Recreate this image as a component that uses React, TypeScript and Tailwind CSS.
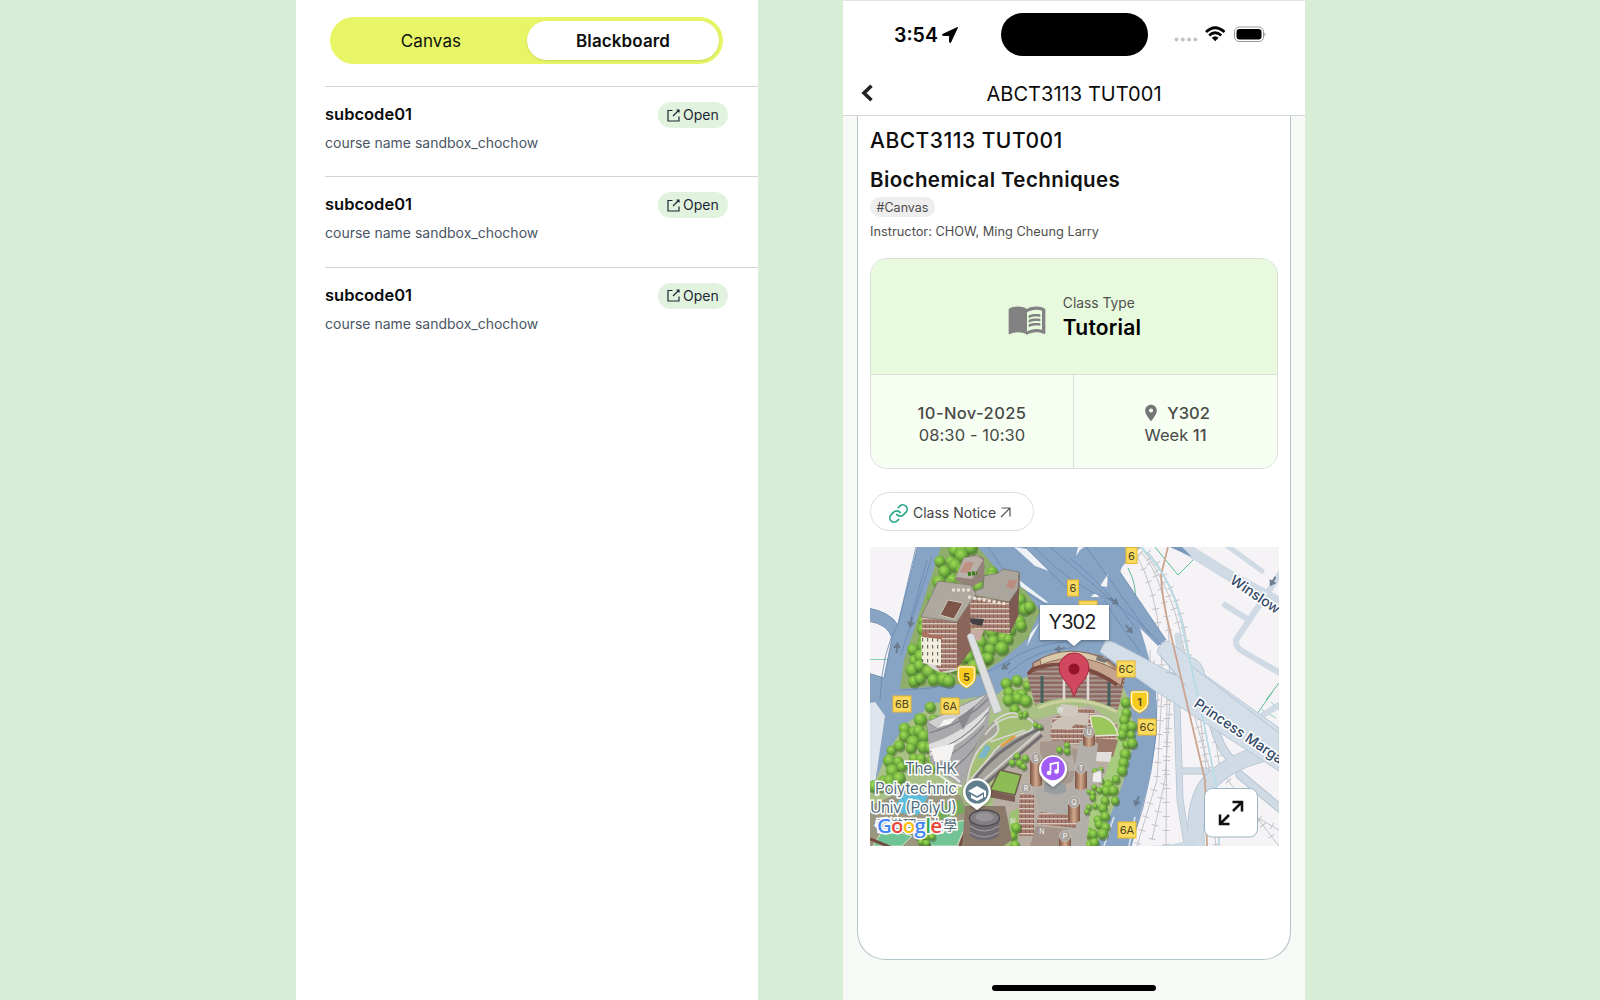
import React from 'react';
import { MdMenuBook, MdPlace } from 'react-icons/md';

interface Course {
  code: string;
  name: string;
}

const courses: Course[] = [
  { code: 'subcode01', name: 'course name sandbox_chochow' },
  { code: 'subcode01', name: 'course name sandbox_chochow' },
  { code: 'subcode01', name: 'course name sandbox_chochow' },
];

type Point = [number, number];

const inside = (x: number, y: number, poly: Point[]) => {
  let hit = false;
  for (let i = 0, j = poly.length - 1; i < poly.length; j = i++) {
    const [xi, yi] = poly[i];
    const [xj, yj] = poly[j];
    if (yi > y !== yj > y && x < ((xj - xi) * (y - yi)) / (yj - yi) + xi) hit = !hit;
  }
  return hit;
};

// Fills a polygon with slightly shuffled tree crowns
const Trees: React.FC<{ area: Point[]; step?: number; size?: number }> = ({ area, step = 10, size = 6.2 }) => {
  const trees: { x: number; y: number; r: number }[] = [];
  let seed = 7;
  const rand = () => {
    seed = (seed * 16807) % 2147483647;
    return seed / 2147483647;
  };
  for (let y = 545; y < 850; y += step) {
    for (let x = 868; x < 1160; x += step) {
      const px = x + rand() * step * 0.7;
      const py = y + rand() * step * 0.7;
      const r = size * (0.8 + rand() * 0.3);
      if (inside(px, py, area)) trees.push({ x: px, y: py, r });
    }
  }
  return (
    <g>
      {trees.map((t, i) => (
        <g key={i}>
          <circle cx={t.x + 1} cy={t.y + 2} r={t.r} fill="#3d5a22" opacity="0.45" />
          <circle cx={t.x} cy={t.y} r={t.r} fill="url(#crown)" />
        </g>
      ))}
    </g>
  );
};

const Rail: React.FC<{ d: string }> = ({ d }) => (
  <g fill="none" stroke="#c3c5ca">
    <path d={d} strokeWidth="1" />
    <path d={d} strokeWidth="7" strokeDasharray="1 13" />
  </g>
);

const RouteBadge: React.FC<{ x: number; y: number; label: string }> = ({ x, y, label }) => {
  const w = label.length > 1 ? 18 : 11;
  return (
    <g>
      <rect x={x - w / 2} y={y - 8} width={w} height={16} fill="#fbdb5d" stroke="#e5b52c" />
      <text x={x} y={y + 4} fontSize="11" textAnchor="middle" fill="#4a4328" className="font-[Inter]">
        {label}
      </text>
    </g>
  );
};

const Shield: React.FC<{ x: number; y: number; label: string }> = ({ x, y, label }) => (
  <g>
    <path
      d={`M${x - 6} ${y - 10}h12q2 0 2 2v8q0 6 -8 10q-8 -4 -8 -10v-8q0 -2 2 -2z`}
      fill="#f6cb1d"
      stroke="#d9ac16"
      strokeWidth="3"
    />
    <path
      d={`M${x - 6} ${y - 10}h12q2 0 2 2v8q0 6 -8 10q-8 -4 -8 -10v-8q0 -2 2 -2z`}
      fill="#f6cb1d"
      stroke="#fff6d0"
      strokeWidth="1.500"
    />
    <text x={x} y={y + 4} fontSize="11" fontWeight="600" textAnchor="middle" fill="#4a4328" className="font-[Inter]">
      {label}
    </text>
  </g>
);

const Letter: React.FC<{ x: number; y: number; label: string }> = ({ x, y, label }) => (
  <g>
    <circle cx={x} cy={y} r="5.500" fill="#aaa49f" stroke="#c3beb9" />
    <text x={x} y={y + 2.5} fontSize="7" textAnchor="middle" fill="#fff" className="font-[Inter]">
      {label}
    </text>
  </g>
);

const TowerShaft: React.FC<{ x: number; y: number; h: number }> = ({ x, y, h }) => (
  <path d={`M${x - 6} ${y}v${h}q6 4 12 0v${-h}z`} fill="url(#shaft)" />
);

const northTrees: Point[] = [
  [942, 549], [972, 547], [992, 568], [1022, 590], [1036, 612], [1026, 634], [1000, 656], [966, 682], [905, 687], [904, 664], [920, 620],
];
const westTrees: Point[] = [
  [926, 702], [944, 712], [934, 735], [934, 765], [925, 775], [905, 770], [896, 790], [872, 790], [890, 752], [904, 728],
];
const bridgeTrees: Point[] = [
  [1000, 686], [1027, 674], [1033, 704], [1018, 714], [1000, 708],
];
const eastTrees: Point[] = [
  [1118, 690], [1129, 694], [1134, 735], [1124, 780], [1102, 846], [1082, 846], [1100, 800], [1114, 770], [1120, 735],
];

const CampusMap: React.FC = () => (
  <svg className="block h-[299px] w-full" viewBox="870 547 409 299" preserveAspectRatio="none">
    <defs>
      <radialGradient id="crown" cx="42%" cy="35%" r="65%">
        <stop offset="0" stopColor="#a5dc58" />
        <stop offset="0.5" stopColor="#79b843" />
        <stop offset="1" stopColor="#4c822e" />
      </radialGradient>
      <linearGradient id="shaft">
        <stop offset="0" stopColor="#7b5242" />
        <stop offset="0.5" stopColor="#d5aa8d" />
        <stop offset="1" stopColor="#7c5443" />
      </linearGradient>
      <pattern id="brick" width="4" height="5" patternUnits="userSpaceOnUse">
        <rect width="4" height="5" fill="#a67c6e" />
        <rect y="3" width="4" height="1.300" fill="#d9cac0" />
        <rect x="1" width="1" height="3" fill="#8a6156" />
      </pattern>
      <pattern id="floors" width="40" height="4.500" patternUnits="userSpaceOnUse">
        <rect width="40" height="4.500" fill="#8e685e" />
        <rect width="40" height="2" fill="#a79a94" />
      </pattern>
      <pattern id="white-tower" width="5" height="7" patternUnits="userSpaceOnUse">
        <rect width="5" height="7" fill="#f2efdf" />
        <rect x="2" y="1" width="1.200" height="3.500" fill="#6b6a64" />
      </pattern>
      <filter id="drop" x="-20%" y="-20%" width="140%" height="150%">
        <feDropShadow dx="0" dy="1" stdDeviation="1.500" floodOpacity="0.4" />
      </filter>
    </defs>

    <rect x="870" y="547" width="409" height="299" fill="#f5f3f5" />

    {/* railway yard */}
    <Rail d="M1137 556Q1156 590 1160 640T1162 690L1157 780L1137 846" />
    <Rail d="M1141 552Q1166 580 1169 640L1170 700L1165 780L1152 840" />
    <Rail d="M1148 552Q1180 590 1188 650L1190 665" />
    <Rail d="M1141 547Q1174 590 1184 650L1192 668" />
    <Rail d="M1167 690L1166 846" />
    <Rail d="M1199 705L1205 760L1216 846" />
    <Rail d="M1190 700L1207 760L1226 820" />
    <Rail d="M1210 700L1220 770L1279 846" />
    <Rail d="M1235 805L1279 830" />
    <path d="M1135 700L1160 700M1150 650L1151 690M1154 660L1158 700" stroke="#c1c4ca" />
    <path d="M1155 547L1178 575L1194 559M1128 568Q1137 585 1135 600M1266 700L1279 683M1257 714L1273 691" stroke="#5cb99a" fill="none" />
    <path d="M1271 702L1279 710M1262 710L1276 718" stroke="#8fd0ba" fill="none" />

    {/* blue roads */}
    <path d="M870 547H1140L1124 562L1120 572L1166 640L1158 646L1140 628Q1152 665 1156 690L1157 730Q1152 780 1131 846H870Z" fill="#87a4c4" />
    <path d="M868 545H918L898 625Q890 612 868 608Z" fill="#f5f3f5" stroke="#6f91b5" />
    <path d="M868 621Q888 624 892 638L884 678L868 673Z" fill="#f5f3f5" stroke="#6f91b5" />
    <path d="M870 659.500H887" stroke="#8acbb5" />
    <path d="M870 703L875 702L885 716L874 790L870 800Z" fill="#dfe5ec" />
    <path d="M1014 547L1035 566L1049 571L1027 549Z" fill="#eef1f5" />
    <path d="M1019 580L1049 603L1044 602L1021 587Z" fill="#eef1f5" />
    <path d="M1030 634L1040 622L1027 646Z" fill="#eef1f5" />
    <path d="M1108 574L1100 586L1107 587Z" fill="#f5f3f5" />
    <path d="M1091 597Q1096 590 1099 597Z" fill="#f5f3f5" />
    <path d="M1076 556L1080 550L1084 547H1078Z" fill="#eef1f5" />
    <path d="M1121 547H1139L1121 568L1118 580L1108 560Z" fill="#87a4c4" />
    <g fill="none" stroke="#6688b0" strokeWidth="0.8">
      <path d="M916 547L898 624Q882 650 880 700M932 556L901 655M927 560L909 625" />
      <path d="M988 547Q1014 590 1050 607M1025 547L1070 591" />
      <path d="M1034 547Q1070 585 1110 600Q1138 618 1162 646M1050 547L1118 606M1086 547L1150 635" />
      <path d="M1070 558Q1110 590 1137 630M1104 600L1117 620L1140 652" />
      <path d="M1120 572L1166 640" />
      <path d="M1003 665Q1035 640 1080 642M1008 673Q1040 646 1072 648M900 690Q960 690 1010 660" />
      <path d="M1157 700Q1158 770 1131 846" />
    </g>
    <path d="M1114 817L1104 846M1135 817L1129 846" stroke="#dbe5ee" strokeWidth="1.600" />

    {/* pale roads */}
    <g fill="none" stroke="#b5c3d1" strokeLinejoin="round" strokeLinecap="round">
      <path d="M1177 705L1180 800L1188 850" strokeWidth="7" />
      <path d="M1181 771H1206" strokeWidth="7" />
      <path d="M1207 690Q1213 740 1229 757" strokeWidth="9" />
      <path d="M1240 775L1282 810" strokeWidth="9" />
      <path d="M1285 750Q1235 755 1208 784Q1192 806 1197 850" strokeWidth="17" />
    </g>
    <g fill="none" stroke="#cfdae5" strokeLinejoin="round" strokeLinecap="round">
      <path d="M1177 705L1180 800L1188 850" strokeWidth="5.500" />
      <path d="M1181 771H1206" strokeWidth="5.500" />
      <path d="M1207 690Q1213 740 1229 757" strokeWidth="7" />
      <path d="M1240 775L1282 810" strokeWidth="7" />
      <path d="M1285 750Q1235 755 1208 784Q1192 806 1197 850" strokeWidth="15.500" />
      <path d="M1178 636L1182 665" strokeWidth="7" />
      <path d="M1180 545L1232 577L1290 608" strokeWidth="11" />
      <path d="M1222 542L1262 571" strokeWidth="5" />
      <path d="M1282 571L1236 640Q1235 647 1242 651L1285 676" strokeWidth="6" />
      <path d="M1225 605L1249 620" strokeWidth="6" />
      <path d="M1279 705L1252 722" strokeWidth="6" />
    </g>
    <path d="M1170 547H1182L1192 557Z" fill="#7896b9" />
    <path
      d="M1100 652L1106 640L1115 643L1176 675L1157 652Q1160 642 1168 641L1190 657Q1202 660 1205 675L1279 728V771L1190 713L1154 690Z"
      fill="#d4dee8"
      stroke="#b8c8d6"
    />
    <path d="M1160 655L1186 686M1176 675L1166 672M1190 665L1279 733" stroke="#b2c2d1" fill="none" />
    <path d="M1150 846Q1190 844 1190 836L1197 846Z" fill="#ccd8e3" />
    <path d="M1168 547L1161 575Q1162 600 1170 631L1205 780L1207 846" stroke="#cba48f" strokeWidth="1.800" fill="none" />
    <path d="M1141 547Q1176 580 1185 640L1202 714L1219 800V846" stroke="#b8dce6" strokeWidth="1.800" fill="none" />

    {/* north block */}
    <path d="M941 547H978L1000 573L1025 590L1040 611L1028 638L1002 660L965 684L900 689L904 660Z" fill="#8fae6c" />
    <Trees area={northTrees} />
    <path d="M925 662Q940 680 962 668L955 655Z" fill="#d7d4cf" />
    <path d="M955 580L963 558L976 555L984 558V580L970 588Z" fill="#93817a" />
    <path d="M956 577L964 558L977 556L983 560L972 579Z" fill="#b8b0a8" />
    <path d="M965 562L974 562L969 573L960 572Z" fill="#bd9183" />
    <path d="M968 574L977 573" stroke="#3c7b1c" strokeWidth="4" strokeDasharray="3 1" />
    <path d="M1008 602L1020 572L1018 616L1010 634Z" fill="#7d5b52" />
    <path d="M968 595L1009 602L1010 634L970 628Z" fill="url(#brick)" />
    <path d="M968 618L984 619L982 626L972 624Z" fill="#444044" />
    <path d="M966 628L984 630L980 641L972 640Z" fill="#c9aaa2" />
    <path d="M967 594L983 588L984 576L998 573L1003 569L1019 572L1018 589L1009 602Z" fill="#aaa59d" stroke="#7d746e" strokeWidth="0.800" />
    <path d="M1009 580L1017 580L1014 589L1006 587Z" fill="#b98d7d" />
    <path d="M952 588L968 590V600L948 596Z" fill="#a38778" />
    <path d="M956 620L970 596L971 650L957 669Z" fill="#8a655a" />
    <path d="M922 617L957 621V669L940 672L922 645Z" fill="url(#brick)" />
    <path d="M938 581L971 585L976 594L957 622L921 617Z" fill="#aea99f" stroke="#827970" strokeWidth="0.800" />
    <path d="M948 600L963 603L954 619L940 615Z" fill="#7e5647" stroke="#d0cabf" />
    <path d="M952 590H972M968 597L1006 604" stroke="#e7e1d8" strokeWidth="3" strokeDasharray="3 2" />
    <path d="M921 637L941 639V666L922 663Z" fill="url(#white-tower)" />
    <path d="M922 633L930 636L942 638" stroke="#aa715f" strokeWidth="3" fill="none" />

    {/* main campus */}
    <path
      d="M935 703L998 694L1010 682L1030 676L1120 680L1129 700L1135 735Q1125 790 1096 846H870V792L890 748L906 724Z"
      fill="#a9c184"
    />
    <path d="M985 846L995 790L1010 750L1035 720L1090 705L1115 725L1108 770L1080 846Z" fill="#b8aea3" />
    <Trees area={westTrees} step={10} size={6} />
    <Trees area={bridgeTrees} step={9} size={5.500} />
    <path d="M1117 695Q1138 740 1096 846H1074L1105 775L1119 730Z" fill="#a8cb7e" />
    <Trees area={eastTrees} step={9} size={5} />

    {/* low roofs and courts bottom left */}
    <path d="M870 806L905 790L960 795L985 846H870Z" fill="#9a967f" />
    <path d="M892 812L903 793L928 796L918 815Z" fill="#5dbddb" />
    <path d="M884 828L912 836L902 846H873Z" fill="#6fc495" stroke="#d9e2c5" />
    <path d="M935 824L968 820L957 846H925Z" fill="#72c496" stroke="#e1e3cf" />
    <path d="M931 808L960 800L966 812L940 820Z" fill="#74aa59" />
    <path d="M870 839L900 851M916 828L930 846M960 846L973 812" stroke="#754b42" strokeWidth="3" />
    <Trees
      area={[[915, 822], [930, 818], [934, 846], [912, 846]]}
      step={7}
      size={4}
    />

    {/* sweeping tower */}
    <path d="M927 722L988 693L991 706L988 728L962 786L948 778L930 762Z" fill="#a9a8ab" />
    <path d="M927 722L988 693Q970 714 938 729Z" fill="#d0d0d1" stroke="#8a888c" strokeWidth="0.800" />
    <path d="M929 744Q960 735 990 706L984 721Q960 748 930 756Z" fill="#dededf" />
    <path d="M929 733Q964 724 989 698M930 752Q965 742 988 712M934 764Q968 746 984 726M945 775Q970 757 978 742" fill="none" stroke="#807e84" strokeWidth="1.200" />
    <path d="M931 749L955 743L950 760L934 761Z" fill="#f4f3f1" />
    <path d="M944 720L956 718L950 724L939 727Z" fill="#f7f6f4" />
    <path d="M958 718L975 706L963 730Z" fill="#8a888d" />
    <path d="M960 782Q952 774 936 768M962 786L952 784L938 774" stroke="#f0efec" strokeWidth="2" fill="none" />

    {/* winding garden deck */}
    <path d="M964 788Q970 742 993 722L1020 712L1045 726L1005 765L976 792Z" fill="#a3a399" />
    <path d="M967 784Q972 748 992 738Q1003 730 995 721Q1010 708 1022 716Q1040 722 1030 731Q1000 740 990 757Z" fill="#a3c075" stroke="#d6d5cd" strokeWidth="2" />
    <path d="M978 758L986 744L991 748L985 758Z" fill="#7cb7c9" />
    <path d="M968 788Q987 760 1012 744T1044 729M975 793L1042 735" stroke="#716d71" strokeWidth="3" fill="none" />
    <path d="M972 790L1040 731M985 735Q1000 714 1022 717M990 742L1025 730" stroke="#d7d5d1" strokeWidth="1.800" fill="none" />
    <path d="M1001 746L1015 736" stroke="#e89e3f" strokeWidth="2.500" />
    <Trees area={[[1017, 711], [1028, 711], [1028, 717], [1017, 717]]} step={5} size={2.5} />
    <Trees area={[[1030, 722], [1042, 722], [1042, 729], [1030, 729]]} step={5} size={2.5} />
    <Trees area={[[1015, 754], [1030, 752], [1024, 768], [1010, 766]]} step={7} size={3.5} />

    {/* central buildings */}
    <path d="M1000 770L1021 775L1015 795L990 790Z" fill="#8dbb56" stroke="#6d5d4a" strokeWidth="1.500" />
    <path d="M990 790L1015 796V802L988 797Z" fill="#7b5f54" />
    <path d="M1050 735L1053 718L1070 713L1074 707L1094 710L1096 716L1117 724L1116 742L1090 747L1052 741Z" fill="url(#brick)" />
    <path d="M1052 723L1068 712L1089 713L1088 726L1075 724L1070 730L1052 728Z" fill="#cdc3b9" />
    <path d="M1090 716Q1113 713 1118 735L1094 736Z" fill="#9bc75b" stroke="#e9e4da" strokeWidth="1.500" />
    <path d="M1058 708L1062 704L1078 706L1078 716L1060 716Z" fill="#d0c9bf" />
    <path d="M1096 738L1118 740L1113 757L1093 754Z" fill="#9b7868" />
    <path d="M1095 752L1112 752L1110 762L1094 761Z" fill="#e2dfdc" />
    <path d="M1040 742L1062 740L1070 748L1095 752L1090 775L1066 784L1040 775Z" fill="#a8978d" />
    <path d="M1056 748L1070 744L1076 770L1058 774Z" fill="#b5ada5" />
    <path d="M1079 742Q1089 734 1098 744L1086 846H1062Z" fill="#b3afab" />
    <path d="M1035 788L1078 790L1080 815L1040 812Z" fill="#b0aca8" />
    <path d="M1040 812L1078 816L1076 828L1036 824Z" fill="url(#brick)" />
    <path d="M1020 789L1034 793V836H1018Z" fill="url(#brick)" />
    <path d="M1018 792L1028 784L1038 787L1034 795Z" fill="#b6b1ac" />
    <path d="M1036 826L1068 829L1063 846H1030Z" fill="#a39388" />
    <path d="M1010 812L1019 808L1018 846H1005Z" fill="#9ec073" />
    <TowerShaft x={1089} y={733} h={12} />
    <TowerShaft x={1081} y={771} h={17} />
    <TowerShaft x={1036} y={760} h={25} />
    <TowerShaft x={1074} y={804} h={17} />
    <TowerShaft x={1065} y={837} h={12} />
    <Letter x={1089} y={732} label="U" />
    <Letter x={1081} y={768} label="T" />
    <Letter x={1036} y={758} label="S" />
    <Letter x={1026} y={788} label="R" />
    <Letter x={1074} y={802} label="Q" />
    <Letter x={1065} y={836} label="P" />
    <g fontSize="7" fill="#eee" textAnchor="middle" className="font-[Inter]">
      <text x="1013" y="824">N</text>
      <text x="1042" y="834">N</text>
      <text x="1060" y="713">W</text>
      <text x="984.500" y="813">M</text>
    </g>
    <Trees area={[[1091, 763], [1106, 765], [1097, 812], [1086, 812]]} step={7} size={2.8} />
    <Trees area={[[1055, 745], [1068, 745], [1068, 755], [1055, 755]]} step={7} size={3.5} />
    <Trees area={[[1010, 822], [1020, 822], [1018, 846], [1006, 846]]} step={8} size={5} />
    <path d="M1093 773L1101 770L1102 783L1092 782Z" fill="#f0eeec" stroke="#b7b3b0" />
    <path d="M1044 784Q1053 778 1066 785V792Q1054 797 1044 791Z" fill="#989da0" />

    {/* round tower */}
    <path d="M965 806L1005 806L1012 840L998 850H962Z" fill="#8b7a69" />
    <path d="M970 818V836Q984 845 999 836V818Z" fill="#6f6a70" />
    <ellipse cx="984.500" cy="818" rx="15" ry="8" fill="#817d81" stroke="#504d54" strokeWidth="1.500" />
    <ellipse cx="984.500" cy="817" rx="9" ry="4.500" fill="#979498" />
    <path d="M970 826Q984 836 999 826M970 832Q984 842 999 832" stroke="#a8a3a8" fill="none" />

    {/* crescent building */}
    <path d="M1027 675Q1035 657 1048 657L1053 653Q1090 648 1108 659L1124 673L1125 680L1118 710Q1076 689 1035 705Z" fill="url(#floors)" />
    <path d="M1033 663Q1066 643 1109 661L1124 674L1121 686Q1076 652 1033 672Z" fill="#c5a58d" stroke="#794e43" />
    <path d="M1040 659Q1069 644 1103 658L1116 670Q1078 649 1041 665Z" fill="#d9c9ab" stroke="#8d6b58" />
    <path d="M1028 674L1033 669Q1072 655 1117 685" stroke="#7c4b42" strokeWidth="3.500" fill="none" />
    <path d="M1042 676V703M1109 682V706" stroke="#45605f" strokeWidth="3" />
    <path d="M1064 672V700M1088 672V700" stroke="#e1dcda" strokeWidth="2.500" />
    <path d="M1097 656L1107 660L1105 663L1096 660Z" fill="#77787c" />
    <path d="M1038 708Q1076 691 1117 712" stroke="#cbd2a0" strokeWidth="3" fill="none" />

    {/* footbridge */}
    <path d="M967 636Q970 631 974 635L1002 711L994 714Z" fill="#dcdedf" stroke="#aaa9a8" strokeWidth="0.700" />

    {/* direction arrows on the roads */}
    {[
      [911, 622, 100], [897, 648, -85], [1006, 666, 140], [1060, 649, 170], [1114, 601, 35], [1129, 629, 50], [1137, 801, 110], [1273, 581, 120],
    ].map(([x, y, angle], i) => (
      <path key={i} d="M-5 -1H0V-4L6 0L0 4V1H-5Z" fill="#6c7c90" transform={`translate(${x} ${y}) rotate(${angle})`} />
    ))}

    <RouteBadge x={1131.5} y={555.5} label="6" />
    <RouteBadge x={1073} y={588} label="6" />
    <rect x="1079" y="601" width="18" height="12" fill="#fbdb5d" stroke="#e5b52c" />
    <RouteBadge x={1126} y={669} label="6C" />
    <RouteBadge x={1147} y={727} label="6C" />
    <RouteBadge x={1127} y={830} label="6A" />
    <RouteBadge x={902} y={704} label="6B" />
    <RouteBadge x={950} y={706} label="6A" />
    <Shield x={966.5} y={677} label="5" />
    <Shield x={1139.5} y={702} label="1" />

    <g fill="#33496a" stroke="#fff" strokeWidth="3" paintOrder="stroke" fontSize="14" fontWeight="500" className="font-[Inter]">
      <text transform="translate(1229 582.500) rotate(34)">Winslow</text>
      <text transform="translate(1193 706) rotate(34)">Princess Marga</text>
    </g>
    <g
      fill="#546c7a"
      stroke="#fff"
      strokeWidth="3"
      paintOrder="stroke"
      fontSize="15.500"
      textAnchor="end"
      className="font-[Inter,'Noto_Sans_CJK_TC',sans-serif]"
    >
      <text x="957" y="774" textLength="52">The HK</text>
      <text x="957" y="793.500" textLength="82">Polytechnic</text>
      <text x="957" y="813" textLength="87">Univ (PolyU)</text>
      <text x="957" y="830" fontSize="13.500">香港理工大學</text>
    </g>

    <text x="877" y="833" fontSize="20.500" fontWeight="600" textLength="65" stroke="#fff" strokeWidth="3" paintOrder="stroke" className="font-['Open_Sans']">
      <tspan fill="#4285f4">G</tspan>
      <tspan fill="#ea4335">o</tspan>
      <tspan fill="#fbbc05">o</tspan>
      <tspan fill="#4285f4">g</tspan>
      <tspan fill="#34a853">l</tspan>
      <tspan fill="#ea4335">e</tspan>
    </text>

    {/* place markers */}
    <g filter="url(#drop)">
      <path d="M977 810L968 803A14 14 0 1 1 986 803Z" fill="#fff" />
      <circle cx="977" cy="792" r="11.500" fill="#607d8b" />
      <path d="M977 786L968 791L977 796L984 792V797H986V791ZM971 794.500V798L977 801L983 798V794.500L977 798Z" fill="#fff" />
    </g>
    <g filter="url(#drop)">
      <path d="M1053 787L1044 780A14 14 0 1 1 1062 780Z" fill="#fff" />
      <circle cx="1053" cy="768.500" r="11.800" fill="#a15cf5" />
      <path d="M1050.500 773V764L1058 762.500V771.500" stroke="#fff" strokeWidth="1.800" fill="none" />
      <circle cx="1049" cy="773" r="2.300" fill="#fff" />
      <circle cx="1056.500" cy="771.500" r="2.300" fill="#fff" />
    </g>
    <path
      d="M1074 697Q1072 688 1065 681Q1059 674 1059 668A15 15 0 0 1 1089 668Q1089 674 1083 681Q1076 688 1074 697Z"
      fill="#d0475e"
      stroke="#a62b42"
    />
    <circle cx="1074" cy="669" r="5.500" fill="#951428" />

    <g filter="url(#drop)">
      <path d="M1040 605H1109V640H1081L1074 646L1067 640H1040Z" fill="#fff" />
    </g>
    <text x="1072.500" y="629" fontSize="20" textLength="48" textAnchor="middle" fill="#1c1c1e" className="font-[Inter]">
      Y302
    </text>

    {/* expand button */}
    <rect x="1204.500" y="788.500" width="53" height="48.500" rx="8" fill="#fff" stroke="#9db5c1" />
    <g fill="none" stroke="#111" strokeWidth="2.500">
      <path d="M1232.500 802H1242V811.500M1242 802L1233 811" />
      <path d="M1220 814.500V824H1229.500M1220 824L1229 815" />
    </g>
  </svg>
);

const CourseList: React.FC = () => (
  <section className="h-full w-[462px] bg-white">
    <div className="ml-[34px] mt-[17px] flex h-[47px] w-[393px] rounded-full bg-[#e7f566] p-1 text-[17px] text-[#0d0f0c]">
      <button className="flex-1 pt-[3px] pl-px tracking-[0.1px]">Canvas</button>
      <button className="flex-1 rounded-full bg-white pt-[3px] font-semibold tracking-[0.1px] shadow-sm">Blackboard</button>
    </div>
    <ul className="ml-[29px] mt-[22px]">
      {courses.map((course, index) => (
        <li key={index} className="flex h-[90.3px] items-start justify-between border-t border-[#d0d5dc] pr-[30px] pt-[15px]">
          <div className="-mt-px">
            <h3 className="text-[16.5px] leading-[26px] font-semibold text-[#0b0c0e]">{course.code}</h3>
            <p className="mt-1 text-[14px] leading-6 text-[#4a5563]">{course.name}</p>
          </div>
          <button className="flex h-[26px] w-[70px] items-center gap-[3px] rounded-full bg-[#e1f2df] pb-px pl-[9px] text-[14px] text-[#1d2733]">
            <svg viewBox="0 0 13 13" className="mt-px h-[13px] w-[13px]" fill="none" stroke="currentColor" strokeWidth="1.200">
              <path d="M5.500 1.500H1V12H12V7.500M6 7L12 1M9.500 1H12V3.500" />
            </svg>
            Open
          </button>
        </li>
      ))}
    </ul>
  </section>
);

const StatusBar: React.FC = () => (
  <div className="flex h-[69px] items-start border-t border-[#e5e5e5]">
    <div className="ml-[51px] mt-[19px] flex w-[107px] items-center gap-[4px]">
      <span className="text-[19.5px] leading-[30px] font-semibold text-black">3:54</span>
      <svg viewBox="0 0 16 16" className="h-4 w-4">
        <path d="M15.500 0.500L0.500 7.500Q0 8.200 1 8.400H7.600V15Q7.900 16 8.600 15.300Z" fill="#000" stroke="#000" strokeLinejoin="round" />
      </svg>
    </div>
    <div className="mt-3 h-[43px] w-[147px] rounded-full bg-black" />
    <svg viewBox="0 0 92 18" className="ml-[26px] mt-[24px] h-[18px] w-[92px]">
      <g fill="#c4c4c4">
        <circle cx="2.500" cy="14.500" r="2" />
        <circle cx="8.800" cy="14.500" r="2" />
        <circle cx="15.100" cy="14.500" r="2" />
        <circle cx="21.400" cy="14.500" r="2" />
      </g>
      <g fill="none" stroke="#000" strokeWidth="2.700">
        <path d="M32 7Q41 -1.500 50.500 7" />
        <path d="M35.200 10.500Q41 5 47.300 10.500" />
      </g>
      <path d="M37.800 12.800Q41.200 9.800 44.700 12.800L41.200 16.300Z" fill="#000" />
      <rect x="60.500" y="2" width="29" height="14.500" rx="4.500" fill="none" stroke="#9a9a9a" />
      <rect x="62.500" y="4" width="25" height="10.500" rx="3" fill="#000" />
      <path d="M90.500 7.500Q92.500 9.500 90.500 11.500Z" fill="#888" />
    </svg>
  </div>
);

const ClassDetail: React.FC = () => (
  <section className="flex h-full w-[462px] flex-col bg-[#f7f9f6]">
    <header className="h-[116px] shrink-0 border-b border-[#d5d8da] bg-white">
      <StatusBar />
      <div className="flex h-[46px] items-center pt-[2px]">
        <svg viewBox="0 0 12 18" className="ml-[18px] h-[18px] w-3" fill="none" stroke="#222" strokeWidth="3.600">
          <path d="M10.500 1.800L3 9L10.500 16.200" />
        </svg>
        <h1 className="flex-1 pt-px pr-[30px] text-center text-[20px] tracking-[0.05px] text-[#0c0c0c]">ABCT3113 TUT001</h1>
      </div>
    </header>
    <main className="mx-[14px] h-[844px] shrink-0 rounded-b-[28px] border border-t-0 border-[#b4c3ca] bg-white px-3">
      <h2 className="pt-[9px] text-[21px] leading-8 font-medium tracking-[0.5px] text-[#0c0c0c]">ABCT3113 TUT001</h2>
      <h2 className="mt-[7px] text-[20.5px] leading-8 font-semibold tracking-[0.4px] text-[#111]">Biochemical Techniques</h2>
      <span className="mt-px flex h-5 w-[65px] items-center justify-center rounded-full bg-[#eeeeee] pt-[2px] text-[12.5px] text-[#4b4b4b]">
        #Canvas
      </span>
      <p className="mt-[5px] text-[12.8px] leading-5 text-[#4e4e4e]">Instructor: CHOW, Ming Cheung Larry</p>

      <div className="mt-4 h-[211px] overflow-hidden rounded-[17px] border border-[#dadedb]">
        <div className="flex h-[116px] items-center justify-center gap-[16px] border-b border-[#dadedb] bg-[#e8fade] pt-[2px]">
          <MdMenuBook className="mt-[2px] h-10 w-10 text-[#828282]" />
          <div>
            <div className="text-[13.8px] leading-5 text-[#505050]">Class Type</div>
            <div className="text-[21px] leading-[30px] font-semibold tracking-[0.2px] text-black">Tutorial</div>
          </div>
        </div>
        <div className="grid h-[93px] grid-cols-2 bg-[#f7fef2] text-center text-[16.5px] leading-[22px] text-[#484a48]">
          <div className="border-r border-[#dadedb] pt-[27px]">
            <div className="font-medium tracking-[0.4px]">10-Nov-2025</div>
            <div className="tracking-[0.1px]">08:30 - 10:30</div>
          </div>
          <div className="pt-[27px]">
            <div className="flex items-center justify-center gap-[6px] font-medium">
              <MdPlace className="h-5 w-5 text-[#757575]" />
              Y302
            </div>
            <div>
              Week <span className="font-medium">11</span>
            </div>
          </div>
        </div>
      </div>

      <button className="mt-[23px] flex h-[39px] w-[164px] items-center rounded-full border border-[#dcdedf] pl-[17px] pt-px text-[14px] text-[#444]">
        <svg viewBox="0 0 24 24" className="mr-[4px] mt-[3px] h-[21px] w-[21px]" fill="none" stroke="#2fa98c" strokeWidth="2" strokeLinecap="round" strokeLinejoin="round">
          <path d="M10 13a5 5 0 0 0 7.540.540l3-3a5 5 0 0 0-7.070-7.070l-1.720 1.710" />
          <path d="M14 11a5 5 0 0 0-7.540-.540l-3 3a5 5 0 0 0 7.070 7.070l1.710-1.710" />
        </svg>
        <span>Class Notice</span>
        <svg viewBox="0 0 11 11" className="ml-[4px] h-[11px] w-[11px]" fill="none" stroke="#555" strokeWidth="1.200">
          <path d="M1 10L10 1M1.500 1H10V9.500" />
        </svg>
      </button>

      <div className="mt-4 w-[409px] overflow-hidden">
        <CampusMap />
      </div>
    </main>
    <div className="mx-auto mt-[25px] h-[6px] w-[164px] rounded-full bg-black" />
  </section>
);

const App: React.FC = () => {
  return (
    <div className="flex h-[1000px] w-[1600px] gap-[85px] overflow-hidden bg-[#d7edd6] pl-[296px] font-[Inter,sans-serif]">
      <div className="flex h-full flex-col bg-white">
        <CourseList />
      </div>
      <ClassDetail />
    </div>
  );
};

export default App;
